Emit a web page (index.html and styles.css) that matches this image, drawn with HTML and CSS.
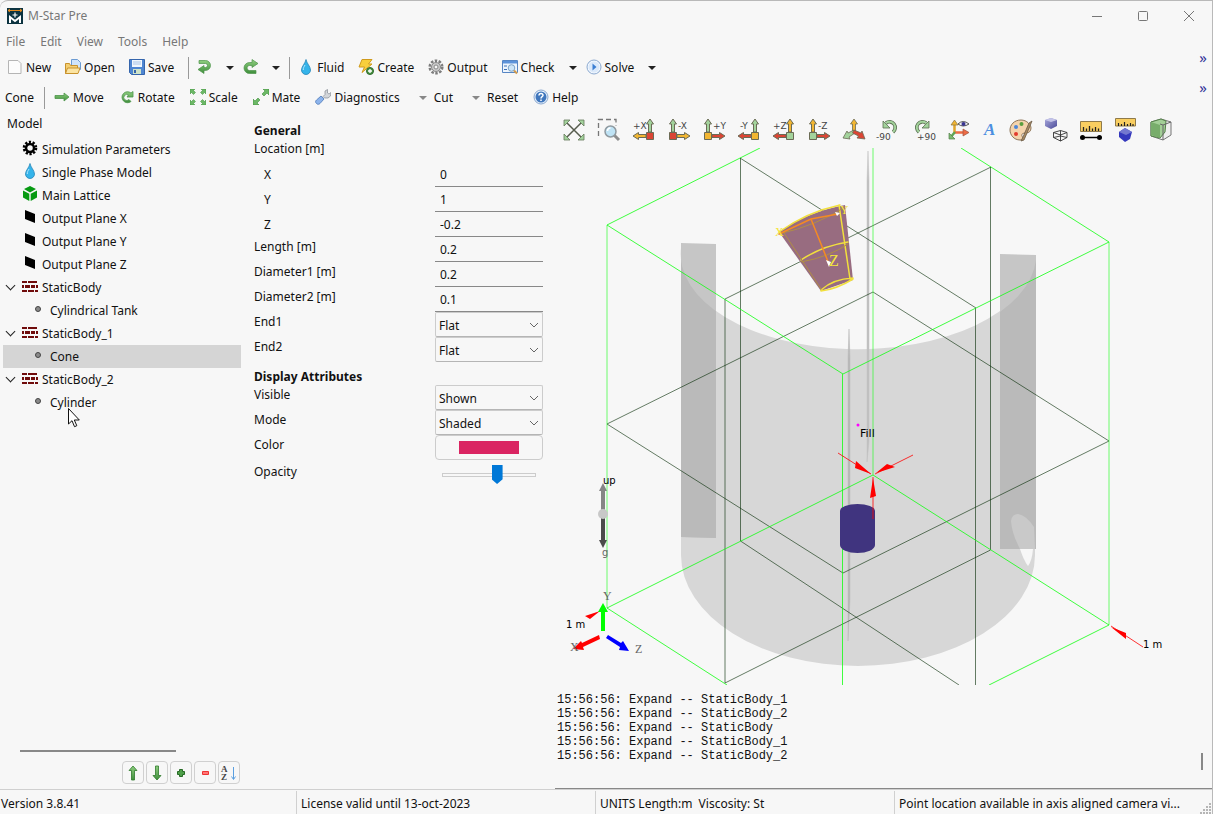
FILE: index.html
```html
<!DOCTYPE html>
<html lang="en">
<head>
    <meta charset="utf-8">
    <title>M-Star Pre</title>
    <link rel="stylesheet" href="styles.css">
</head>
<body>

    <!-- shared icons -->
    <svg class="defs" width="0" height="0">
        <defs>
            <linearGradient id="green" x1="0" y1="0" x2="0" y2="1"><stop offset="0" stop-color="#8fce7f"/><stop offset="1" stop-color="#3f8f3c"/></linearGradient>
            <linearGradient id="purple" x1="0" y1="0" x2="1" y2="1"><stop offset="0" stop-color="#a9a9dc"/><stop offset="1" stop-color="#4a4a98"/></linearGradient>
            <symbol id="drop" viewBox="0 0 16 16"><path d="M8 0.5C7.500 4 3.500 7.500 3.500 11a4.500 4.500 0 0 0 9 0C12.500 7.500 8.500 4 8 .5z" fill="#35b4ea" stroke="#2585b8" stroke-width=".8"/><path d="M7 6c-1 2-2 3-1.700 5" fill="none" stroke="#b5e8ff"/></symbol>
            <symbol id="plane" viewBox="0 0 16 16"><path d="M3 1l10 4v9L3 10z" fill="#000"/></symbol>
            <symbol id="bricks" viewBox="0 0 16 16"><path d="M0 3h5v2H0zM6 3h9v2H6zM0 7h2v3H0zM3 7h5v3H3zM9 7h4v3H9zM14 7h2v3h-2zM0 12h5v2H0zM6 12h6v2H6zM13 12h3v2h-3z" fill="#700b0b"/></symbol>
            <symbol id="dot" viewBox="0 0 16 16"><circle cx="8" cy="8" r="2.500" fill="#8a8a8a" stroke="#444"/></symbol>
            <symbol id="axis-left" viewBox="0 0 24 24"><g stroke="#6b6b55"><path d="M16.500 14V6H14.500L18 1l3.500 5h-2v8z" fill="var(--up)"/><path d="M14 16.500H6.500v-2L1 18l5.500 3.500v-2H14z" fill="var(--side)"/><path d="M14.500 14.500h7v7h-7z" fill="var(--box)"/></g></symbol>
            <symbol id="axis-right" viewBox="0 0 24 24"><g stroke="#6b6b55"><path d="M4.500 14V6h-2L6 1l3.500 5h-2v8z" fill="var(--up)"/><path d="M10 16.500h7.500v-2L23 18l-5.500 3.500v-2H10z" fill="var(--side)"/><path d="M2.500 14.500h7v7h-7z" fill="var(--box)"/></g></symbol>
            <clipPath id="tank-shape"><path d="M681 248A177 95 0 0 0 1036 260V600H681z"/></clipPath>
        </defs>
    </svg>

    <div class="window">
        <header class="titlebar">
            <svg class="logo" width="16" height="16" viewBox="0 0 16 16"><path d="M0 0h16v16H0z" fill="#0c3340"/><path d="M1 2.500h14M3 1L1 2.500 3 4M13 1l2 1.500L13 4" stroke="#e58b1e" fill="none"/><path d="M3 15V9l5 4 5-4v6" fill="none" stroke="#fff" stroke-width="2"/><path d="M8 4.500v5M5.500 7h5" stroke="#fff" stroke-width="1.200"/></svg>
            <span>M-Star Pre</span>
            <div class="controls">
                <button aria-label="Minimize"><svg width="12" height="12"><path d="M1 6.500h10" stroke="#777"/></svg></button>
                <button aria-label="Maximize"><svg width="12" height="12"><rect x="1.500" y="1.500" width="9" height="9" rx="1" fill="none" stroke="#777"/></svg></button>
                <button aria-label="Close"><svg width="12" height="12"><path d="M1 1l10 10M11 1L1 11" stroke="#777"/></svg></button>
            </div>
        </header>

        <nav class="menubar">
            <button>File</button><button>Edit</button><button>View</button><button>Tools</button><button>Help</button>
        </nav>

        <div class="toolbar">
            <button><svg width="16" height="16"><path d="M1.500 1.500h9.500l3 3v10h-12.500z" fill="#fcfcfc" stroke="#b5b5b5"/></svg>New</button>
            <button><svg width="16" height="16"><path d="M6.500.5h6l3 3v7h-9z" fill="#cfe4fa" stroke="#6c9bd2"/><path d="M.5 14.500v-10h4l1 2h7v8z" fill="#f4cf72" stroke="#c8922c"/><path d="M.5 14.500l2-5.500h12.500l-2 5.500z" fill="#fbe4a2" stroke="#c8922c"/></svg>Open</button>
            <button><svg width="16" height="16"><path d="M.5.500h15v15h-13l-2-2z" fill="#4f86d2" stroke="#3565ac"/><path d="M3 1h10v7H3z" fill="#f2f7fd"/><path d="M4 3h8M4 5h8" stroke="#a9c4e6"/><path d="M4 10h8v5H4z" fill="#cfe3c8"/><path d="M5 11h2v3H5z" fill="#3565ac"/></svg>Save</button>
            <span class="sep"></span>
            <button aria-label="Undo"><svg width="15" height="16"><path d="M2 1.500h6.500a5 5 0 0 1 0 10H7v3L1 10.500l6-4v2h1.500a2 2 0 0 0 0-4H2z" fill="url(#green)" stroke="#4d944a" stroke-width=".7"/></svg></button>
            <button class="caret" aria-label="Undo history"></button>
            <button aria-label="Redo"><svg width="15" height="16"><path d="M13 14.500H6.500a5.500 5.500 0 0 1 0-11H9v-3l6 4-6 4v-2H6.500a2.500 2.500 0 0 0 0 5H13z" fill="url(#green)" stroke="#4d944a" stroke-width=".7"/></svg></button>
            <button class="caret" aria-label="Redo history"></button>
            <span class="sep"></span>
            <button><svg width="16" height="16"><use href="#drop"/></svg>Fluid</button>
            <button><svg width="16" height="16"><path d="M4 .5h10L10.500 5H14L4 13.500 6.500 8H1z" fill="#f8cf3c" stroke="#cf9a1c"/><circle cx="12" cy="12" r="3.500" fill="#4a9344" stroke="#2f6b2c"/><path d="M12 10v4M10 12h4" stroke="#fff" stroke-width="1.300"/></svg>Create</button>
            <button><svg width="16" height="16"><circle cx="8" cy="8" r="6.300" fill="none" stroke="#7d7d7d" stroke-width="2.500" stroke-dasharray="2.500 1.450"/><circle cx="8" cy="8" r="4.500" fill="#c9c9c9" stroke="#888"/><circle cx="8" cy="8" r="2" fill="#f7f7f7" stroke="#888"/></svg>Output</button>
            <button><svg width="16" height="16"><path d="M.5 1.500h15v12H.5z" fill="#eef5fd" stroke="#5786c4"/><path d="M1 2h14v2.500H1z" fill="#5d93da"/><path d="M2 7h3M2 10.500h3" stroke="#3f70b5"/><circle cx="9.500" cy="9" r="3.300" fill="#cde5f8" stroke="#7da3c8"/><path d="M12 11.500l3 3" stroke="#d19a4c" stroke-width="2"/></svg>Check</button>
            <button class="caret" aria-label="Check options"></button>
            <button><svg width="16" height="16"><circle cx="8" cy="8" r="7" fill="#f3f8fe" stroke="#8ba9d0"/><circle cx="8" cy="8" r="5.500" fill="#dbe9fa"/><path d="M6.500 4.500l4 3.500-4 3.500z" fill="#3b7ed3"/></svg>Solve</button>
            <button class="caret" aria-label="Solve options"></button>
            <button class="more" aria-label="More tools">»</button>
        </div>

        <div class="toolbar second">
            <span>Cone</span>
            <span class="sep"></span>
            <button><svg width="16" height="16"><path d="M1 6.500h9V4l5 4-5 4V9.500H1z" fill="url(#green)" stroke="#4d944a" stroke-width=".8"/></svg>Move</button>
            <button><svg width="16" height="16"><path d="M12 4A5.500 5.500 0 1 0 12 12.500l-2-2A3 3 0 1 1 9.500 6L8 8h6V2.500z" fill="url(#green)" stroke="#4d944a" stroke-width=".8"/></svg>Rotate</button>
            <button><svg width="16" height="16"><path d="M0 0h5L3.500 1.500l2 2-2 2-2-2L0 5zM16 0h-5l1.500 1.500-2 2 2 2 2-2L16 5zM0 16h5l-1.500-1.500 2-2-2-2-2 2L0 11zM16 16h-5l1.500-1.500-2-2 2-2 2 2L16 11z" fill="#6cb866" stroke="#3f8f3c" stroke-width=".5"/></svg>Scale</button>
            <button><svg width="16" height="16"><path d="M16 0v6l-2-2-3 3-2-2 3-3-2-2zM0 16v-6l2 2 3-3 2 2-3 3 2 2z" fill="#6cb866" stroke="#3f8f3c" stroke-width=".6"/></svg>Mate</button>
            <button><svg width="16" height="16"><path d="M8 7.500l2-2V2l2.500-1.500V4L14 5l2-1.500-.5 3.500-2.500 2H11L9.500 9z" fill="#d3d6da" stroke="#858b93" stroke-width=".7"/><path d="M1.500 14.500c-1.500-1.500-1-2.500 0-3.500L6 7l3 3-4 4.500c-1 1-2.300 1.200-3.500 0z" fill="#8db4ec" stroke="#4d78b8" stroke-width=".8"/></svg>Diagnostics</button>
            <button><span class="caret soft"></span>Cut</button>
            <button><span class="caret soft"></span>Reset</button>
            <button><svg width="16" height="16"><circle cx="8" cy="8" r="7" fill="#e7f0fb" stroke="#8ba9d0"/><circle cx="8" cy="8" r="5.500" fill="#4077bd"/><path d="M6 6.500c0-3 4.200-2.500 4 0-.1 1.200-2 1.300-2 3M8 10.500V12" fill="none" stroke="#fff" stroke-width="1.500"/></svg>Help</button>
            <button class="more" aria-label="More tools">»</button>
        </div>

        <main class="main">
            <section class="model">
                <h2>Model</h2>
                <ul class="tree">
                    <li><svg width="16" height="16"><circle cx="8" cy="8" r="6" fill="none" stroke="#000" stroke-width="2.600" stroke-dasharray="2.200 1.570"/><circle cx="8" cy="8" r="4" fill="none" stroke="#000" stroke-width="2.500"/></svg>Simulation Parameters</li>
                    <li><svg width="16" height="16"><use href="#drop"/></svg>Single Phase Model</li>
                    <li><svg width="16" height="16"><path d="M8 0l6 3-6 3.500L2 3zM1 4.500l6.300 3.300V15L1 11.500zM15 4.500L8.700 7.800V15l6.300-3.500z" fill="#079a12"/></svg>Main Lattice</li>
                    <li><svg width="16" height="16"><use href="#plane"/></svg>Output Plane X</li>
                    <li><svg width="16" height="16"><use href="#plane"/></svg>Output Plane Y</li>
                    <li><svg width="16" height="16"><use href="#plane"/></svg>Output Plane Z</li>
                    <li class="open"><svg width="16" height="16"><use href="#bricks"/></svg>StaticBody</li>
                    <li class="child"><svg width="16" height="16"><use href="#dot"/></svg>Cylindrical Tank</li>
                    <li class="open"><svg width="16" height="16"><use href="#bricks"/></svg>StaticBody_1</li>
                    <li class="child selected"><svg width="16" height="16"><use href="#dot"/></svg>Cone</li>
                    <li class="open"><svg width="16" height="16"><use href="#bricks"/></svg>StaticBody_2</li>
                    <li class="child"><svg width="16" height="16"><use href="#dot"/></svg>Cylinder
                        <svg class="pointer" width="12" height="20"><path d="M.5.500v15.500l3.500-3.300 2.500 6 2.300-1-2.500-5.700h5z" fill="#fff" stroke="#111"/></svg>
                    </li>
                </ul>
                <div class="hscroll"></div>
                <div class="tree-buttons">
                    <button aria-label="Move up"><svg width="16" height="16"><path d="M8 1l4 4.500H9.500V15h-3V5.500H4z" fill="url(#green)" stroke="#2f7a2c" stroke-width=".8"/></svg></button>
                    <button aria-label="Move down"><svg width="16" height="16"><path d="M8 15l4-4.500H9.500V1h-3v9.500H4z" fill="url(#green)" stroke="#2f7a2c" stroke-width=".8"/></svg></button>
                    <button aria-label="Add"><svg width="16" height="16"><path d="M6.500 4.500h3v2h2v3h-2v2h-3v-2h-2v-3h2z" fill="#4fa04a" stroke="#276b25"/></svg></button>
                    <button aria-label="Remove"><svg width="16" height="16"><path d="M5.500 6.500h6v3h-6z" fill="#ff7777" stroke="#e33"/></svg></button>
                    <button aria-label="Sort"><svg width="18" height="20"><text class="sort-text" x="1" y="9">A</text><text class="sort-text" x="1" y="17">Z</text><path d="M13.500 4v12M11.500 13.500l2 3 2-3" fill="none" stroke="#5b9fe0"/></svg></button>
                </div>
            </section>

            <form class="props">
                <h3>General</h3>
                <p class="group">Location [m]</p>
                <div class="row sub"><label for="x">X</label><input id="x" type="text" value="0"></div>
                <div class="row sub"><label for="y">Y</label><input id="y" type="text" value="1"></div>
                <div class="row sub"><label for="z">Z</label><input id="z" type="text" value="-0.2"></div>
                <div class="row"><label for="length">Length [m]</label><input id="length" type="text" value="0.2"></div>
                <div class="row"><label for="d1">Diameter1 [m]</label><input id="d1" type="text" value="0.2"></div>
                <div class="row"><label for="d2">Diameter2 [m]</label><input id="d2" type="text" value="0.1"></div>
                <div class="row"><label for="end1">End1</label><select id="end1"><option>Flat</option></select></div>
                <div class="row"><label for="end2">End2</label><select id="end2"><option>Flat</option></select></div>
                <h3 class="display">Display Attributes</h3>
                <div class="row"><label for="visible">Visible</label><select id="visible"><option>Shown</option></select></div>
                <div class="row"><label for="mode">Mode</label><select id="mode"><option>Shaded</option></select></div>
                <div class="row"><label for="color">Color</label><button type="button" id="color" class="swatch" aria-label="Color"><span></span></button></div>
                <div class="row slider"><label for="opacity">Opacity</label><input id="opacity" type="range" min="0" max="100" value="60"></div>
            </form>

            <section class="view">
                <div class="view-tools">
                    <button aria-label="Fit view"><svg width="24" height="24"><path d="M4 4l16 16M20 4L4 20" stroke="#555b4c" stroke-width="1.500"/><path d="M2 2h6L2 8zM22 2h-6l6 6zM2 22h6l-6-6zM22 22h-6l6-6z" fill="#a3d39c" stroke="#66785c" stroke-width=".8"/></svg></button>
                    <button aria-label="Zoom to box"><svg width="24" height="24"><path d="M1.500 18V1.500H19V8" fill="none" stroke="#777" stroke-width="1.300" stroke-dasharray="5 3"/><path d="M17 17l5 5" stroke="#8d8d8d" stroke-width="3"/><circle cx="13.500" cy="13.500" r="5.500" fill="#bfe3f5" stroke="#909aa0" stroke-width="1.500"/><path d="M10.500 13a3 3 0 0 1 3-3" fill="none" stroke="#fff" stroke-width="1.500"/></svg></button>
                    <button class="axis x" aria-label="+X view"><svg width="24" height="24"><use href="#axis-left"/><text x="1" y="11">+X</text></svg></button>
                    <button class="axis x" aria-label="-X view"><svg width="24" height="24"><use href="#axis-right"/><text x="11" y="11">-X</text></svg></button>
                    <button class="axis y" aria-label="+Y view"><svg width="24" height="24"><use href="#axis-right"/><text x="11" y="11">+Y</text></svg></button>
                    <button class="axis y" aria-label="-Y view"><svg width="24" height="24"><use href="#axis-left"/><text x="3" y="11">-Y</text></svg></button>
                    <button class="axis z" aria-label="+Z view"><svg width="24" height="24"><use href="#axis-left"/><text x="1" y="11">+Z</text></svg></button>
                    <button class="axis z" aria-label="-Z view"><svg width="24" height="24"><use href="#axis-right"/><text x="11" y="11">-Z</text></svg></button>
                    <button aria-label="Isometric view"><svg width="24" height="24"><g stroke="#6b6b55" stroke-width=".8"><path d="M10.500 14V6H8.500L12 1l3.500 5h-2v8z" fill="#f2b632"/><path d="M12 12l-6 3-1-2-4 7 7 1-1-2 6-4z" fill="#a3d39c"/><path d="M12 12l7 3 1-2 3 8-8-1 1.500-2-6-3z" fill="#db4534"/></g></svg></button>
                    <button class="axis" aria-label="Rotate -90"><svg width="24" height="24"><path d="M9 5a5.500 5.500 0 1 1 7 9" fill="none" stroke="#5b7052" stroke-width="3.600"/><path d="M9 5a5.500 5.500 0 1 1 7 9" fill="none" stroke="#a3d39c" stroke-width="2"/><path d="M6 3v7h7z" fill="#a3d39c" stroke="#5b7052" stroke-width=".8"/><text x="-1" y="22">-90</text></svg></button>
                    <button class="axis" aria-label="Rotate +90"><svg width="24" height="24"><path d="M14 5a5.500 5.500 0 1 0-7 9" fill="none" stroke="#5b7052" stroke-width="3.600"/><path d="M14 5a5.500 5.500 0 1 0-7 9" fill="none" stroke="#a3d39c" stroke-width="2"/><path d="M17 3v7h-7z" fill="#a3d39c" stroke="#5b7052" stroke-width=".8"/><text x="5" y="22">+90</text></svg></button>
                    <button aria-label="Show axes"><svg width="24" height="24"><g fill="none"><path d="M7.500 15V6" stroke="#e0a52c" stroke-width="2.500"/><path d="M8 14.500h9" stroke="#ee6b45" stroke-width="2.500"/><path d="M8 14l-5 6" stroke="#5fa554" stroke-width="2.500"/></g><path d="M4 7l3.500-5L11 7z" fill="#f2b632" stroke="#857347" stroke-width=".7"/><path d="M16 11l6 3.500-6 3.500z" fill="#ee6b45" stroke="#9b5340" stroke-width=".7"/><path d="M2 15v6h6z" fill="#7cb870" stroke="#55804a" stroke-width=".7"/><path d="M11 6q5-5 11 0-6 4-11 0z" fill="#eee" stroke="#555"/><circle cx="16.500" cy="6" r="2" fill="#39358f"/></svg></button>
                    <button class="narrow" aria-label="Text"><svg width="16" height="24"><text class="letter" x="2" y="17">A</text></svg></button>
                    <button aria-label="Colors"><svg width="24" height="24"><path d="M12 2C5 2 1 7 1 12s4 10 10 10c3 0 3-2 2-4s1-3 4-3 5-2 5-5-4-8-10-8z" fill="#f4d3ac" stroke="#8d7457"/><circle cx="7" cy="9" r="2" fill="#4c86d8"/><circle cx="12.500" cy="6" r="2" fill="#5a9e3f"/><circle cx="7" cy="16" r="2" fill="#e23a2c"/><path d="M20 5l3-2-2 5-6 14-3 1 2-4z" fill="#a98a62" stroke="#6b5a45" stroke-width=".8"/></svg></button>
                    <button aria-label="Solid or wireframe"><svg width="24" height="24"><path d="M1 2l6-2 6 2v6l-6 3-6-3z" fill="url(#purple)"/><path d="M1 2l6 2 6-2-6-2z" fill="#c3c3e8"/><path d="M9.500 14.500l7-2 6.500 2v5L16.500 23l-7-3.500zM9.500 14.500l7 2.500 6.500-2.500M16.500 17v6M16.500 12.500v5.500l-7 1.500M16.500 18l6.500 1.500" fill="none" stroke="#333" stroke-width=".9"/></svg></button>
                    <button aria-label="Measure"><svg width="24" height="24"><path d="M1.500 3.500h21v10h-21z" fill="#f9ce60" stroke="#8f7a4a"/><path d="M4.500 13V9M7.500 13v-2.500M10.500 13V8M13.500 13v-2.500M16.500 13V9M19.500 13v-2.500" stroke="#222" stroke-width="1.300"/><path d="M3 19.500h18" stroke="#000" stroke-width="1.500"/><circle cx="3.500" cy="19.500" r="2.500"/><circle cx="20.500" cy="19.500" r="2.500"/></svg></button>
                    <button aria-label="Measure body"><svg width="24" height="24"><path d="M1.500.500h20v7.500h-20z" fill="#f9ce60" stroke="#8f7a4a"/><path d="M4.500 8V5M7.500 8V6M10.500 8V4M13.500 8V6M16.500 8V5M19 8V6" stroke="#222" stroke-width="1.200"/><path d="M11 10l7 4-2 7-5 3-6-5 0-5z" fill="#3438bd"/><path d="M11 10l7 4-6 3-7-3z" fill="#7377cf"/></svg></button>
                    <button aria-label="Clip box"><svg width="24" height="24"><path d="M2 4l10-3 10 3v13l-8 5-12-4z" fill="#eee" stroke="#777"/><path d="M2 4l10-3 5 2-1 11-5 6-9-2z" fill="#a3cf97" stroke="#55804a"/><path d="M2 4l9 3v13l-9-3z" fill="#78ad6b"/><path d="M14 7l8-3M14 7v15M14 7l-3-1" fill="none" stroke="#666"/></svg></button>
                </div>

                <!-- 3D scene: domain box, tank, cone and cylinder -->
                <svg class="scene" viewBox="555 148 657 537" preserveAspectRatio="xMidYMid meet">
                    <g class="tank">
                        <path d="M681 248A177 95 0 0 0 1035 260V555A177 111 0 0 1 681 555z" fill="#d7d7d7"/>
                        <path d="M681 243l35 1v294l-35-1zM1000 254l36 1v294h-36z" fill="#c6c6c6"/>
                        <path d="M681 243l35 1v294l-35-1zM1000 254l36 1v294h-36z" fill="#bababa" clip-path="url(#tank-shape)"/>
                        <path d="M1011 521q1-7 7-7 8 1 16 13l1 22h-15q-8-15-9-28z" fill="#c9c9c9"/>
                        <path d="M1020 549h13q-1 12-5 17-4-5-8-17z" fill="#f7f7f7"/>
                        <path d="M868 151l1 30v260l-2 21V181z" fill="#c0c0c0" stroke="#c0c0c0" stroke-width=".5"/>
                        <path d="M849 329l1 30v240l-2 42V359z" fill="#b8b8b8" stroke="#b8b8b8" stroke-width=".5"/>
                    </g>
                    <g class="planes">
                        <path d="M740.500 158V541L959 685"/>
                        <path d="M740 158L976 308"/>
                        <path d="M975.500 308V685"/>
                        <path d="M725 299L991 167M990.500 167V550L725 683M725 299V683"/>
                        <path d="M607 424L873 292 1109 441 843 573z"/>
                    </g>
                    <g class="box">
                        <path d="M760 148L607 225 843 374 1109 242 961 148"/>
                        <path class="faint" d="M607 225V608M873 148V475M1109 242V625"/>
                        <path d="M842.500 374V685"/>
                        <path d="M727 685L607 608 873 475 1109 625 989 685"/>
                    </g>
                    <g class="cone">
                        <path d="M779 232Q807 212 845 205L853 280 821 291z" fill="#986c80"/>
                        <path d="M779 232Q807 212 840 205M801 260Q822 246 848 242M821 291Q837 289 853 279M821 290Q833 279 853 278M839 205L850 279" stroke="#f2e03c" stroke-width="1.500"/>
                        <path d="M779 234Q818 225 845 207M801 262Q829 257 848 244M784 233L821 289" stroke="#b08e45"/>
                        <path d="M779 234L811 219 838 214M811 219L829 264" stroke="#f58a22" stroke-width="1.500"/>
                        <path d="M835 212l5 1-3 3zM826 260l5 2-2 5z" fill="#fff"/>
                        <text x="775" y="236">X</text><text x="840" y="214">Y</text><text class="big" x="829" y="266">Z</text>
                    </g>
                    <path d="M840 511a17.500 7 0 0 1 35 0v34a17.500 8 0 0 1-35 0z" fill="#40347f"/>
                    <circle cx="858" cy="425" r="1.500" fill="#f0f"/>
                    <g fill="#f00" stroke="#f00" stroke-width="1">
                        <path d="M838 453l33 21M913 455l-38 19M873 519v-42M1143 647l-32-21" fill="none" stroke-width=".8"/>
                        <path d="M871 474l-15-13-1 7zM876 473l11-9 8 3zM873 478l-3 20 6-2zM1111 627l15 6v6zM600 611l-15 5 5 3z" stroke="none"/>
                    </g>
                    <g class="scene-labels">
                        <text class="fill-label" x="860" y="437">Fill</text>
                        <text x="603" y="484">up</text>
                        <text x="602" y="556" fill="#666">g</text>
                        <text x="566" y="628">1 m</text>
                        <text x="1143" y="648">1 m</text>
                    </g>
                    <g>
                        <path d="M601 510V491h-2l4-8 4 8h-2v19z" fill="#858585"/>
                        <path d="M601 516v24h-2l4 8 4-8h-2v-24z" fill="#4b4b4b"/>
                        <circle cx="603" cy="514" r="5" fill="#c8c8c8"/>
                        <path d="M601 631V612h-3l5-9 5 9h-3v19z" fill="#0f0"/>
                        <path d="M599 635l-17 8-1-2-8 8 11 1-1-3 17-8z" fill="#f00"/>
                        <path d="M608 635l13 8 2-2 6 10-10-1 1-3-14-9z" fill="#00f"/>
                    </g>
                    <g class="triad">
                        <text x="570" y="651">X</text><text x="603" y="600">Y</text><text x="635" y="653">Z</text>
                    </g>
                </svg>

                <div class="log">
                    <pre>15:56:56: Expand -- StaticBody_1
15:56:56: Expand -- StaticBody_2
15:56:56: Expand -- StaticBody
15:56:56: Expand -- StaticBody_1
15:56:56: Expand -- StaticBody_2</pre>
                    <span class="thumb"></span>
                </div>
            </section>
        </main>

        <footer class="status">
            <span>Version 3.8.41</span>
            <span>License valid until 13-oct-2023</span>
            <span>UNITS Length:m&nbsp; Viscosity: St</span>
            <span>Point location available in axis aligned camera vi...</span>
            <svg class="grip" width="12" height="12"><path d="M9 1h2v2H9zM6 4h2v2H6zM9 4h2v2H9zM3 7h2v2H3zM6 7h2v2H6zM9 7h2v2H9zM0 10h2v2H0zM3 10h2v2H3zM6 10h2v2H6zM9 10h2v2H9z" fill="#b5b5b5"/></svg>
        </footer>
    </div>

</body>
</html>
```
FILE: styles.css
```css
* {
    box-sizing: border-box;
}

body {
    margin: 0;
    background: #f7f7f7;
    color: #111;
    font-family: "Noto Sans", "Open Sans", sans-serif;
    font-size: 12px;
    line-height: 18px;
}

button, input, select {
    font: inherit;
    color: inherit;
}

button {
    background: none;
    border: none;
    padding: 0;
}

svg {
    display: block;
    flex: none;
}

.defs {
    position: absolute;
}

.window {
    display: flex;
    flex-direction: column;
    min-height: 100vh;
    border-top: 1px solid #b9b9b9;
    border-right: 1px solid #b9b9b9;
    border-top-left-radius: 8px;
}

/* title and menus */
.titlebar {
    display: flex;
    align-items: center;
    gap: 5px;
    height: 29px;
    padding-left: 7px;
    color: #777;
}

.controls {
    display: flex;
    gap: 34px;
    margin-left: auto;
    padding-right: 17px;
}

.menubar {
    display: flex;
    gap: 15px;
    height: 22px;
    padding: 2px 6px 0;
}

.menubar button {
    color: #777;
}

/* toolbars */
.toolbar {
    display: flex;
    align-items: center;
    gap: 14px;
    height: 30px;
    padding: 1px 0 0 7px;
}

.toolbar.second {
    gap: 15px;
    padding-left: 5px;
}

.toolbar button {
    display: flex;
    align-items: center;
    gap: 3px;
}

.toolbar svg {
    margin-bottom: 2px;
}

.sep {
    width: 1px;
    height: 22px;
    margin: 0 -6px 0 0;
    background: #999;
}

.second .sep {
    margin-left: -5px;
}

.caret::before {
    content: "";
    display: block;
    border: 4px solid transparent;
    border-top-color: #222;
    border-bottom-width: 0;
}

button.caret {
    margin-right: -5px;
}

.caret.soft {
    padding: 0 4px;
}

.caret.soft::before {
    border-top-color: #888;
}

.toolbar .more {
    margin-left: auto;
    padding-right: 5px;
    color: #339;
    font-size: 15px;
    line-height: 8px;
    align-self: flex-start;
}

/* main area */
.main {
    display: grid;
    grid-template-columns: 245px 310px 1fr;
    flex: 1;
}

.model {
    display: flex;
    flex-direction: column;
    padding: 3px 4px 5px 3px;
}

.model h2 {
    margin: 0 0 5px 4px;
    font-size: 12px;
    font-weight: normal;
}

.tree {
    list-style: none;
    margin: 0;
    padding: 0;
}

.tree li {
    position: relative;
    display: flex;
    align-items: center;
    gap: 4px;
    height: 23px;
    padding-left: 19px;
}

.tree svg {
    margin-bottom: 3px;
}

.tree .child {
    padding-left: 27px;
}

.tree .selected {
    background: #d5d5d5;
}

.tree .open::before {
    content: "";
    position: absolute;
    left: 4px;
    top: 6px;
    width: 6px;
    height: 6px;
    border: solid #222;
    border-width: 0 1px 1px 0;
    transform: rotate(45deg);
}

.pointer {
    position: absolute;
    left: 65px;
    top: 17px;
}

.hscroll {
    width: 156px;
    height: 2px;
    margin: auto 0 9px 17px;
    background: #888;
}

.tree-buttons {
    display: flex;
    gap: 2px;
    margin-left: 119px;
}

.tree-buttons button {
    display: grid;
    place-items: center;
    width: 22px;
    height: 23px;
    border: 1px solid #d0d0d0;
    border-radius: 4px;
}

.sort-text {
    font: bold 9px "Liberation Serif", serif;
    fill: #444;
}

/* property form */
.props {
    padding: 10px 9px;
}

.props h3 {
    margin: 0;
    font-size: 12px;
    line-height: 18px;
}

.props .display {
    margin: 6px 0 -1px;
}

.group {
    margin: 0 0 4px;
}

.row {
    display: grid;
    grid-template-columns: 181px 108px;
    height: 25px;
}

.row label {
    padding-top: 1px;
}

.row.sub label {
    padding: 4px 10px 0;
}

.row input[type="text"] {
    width: 100%;
    height: 25px;
    padding: 0 5px;
    border: none;
    border-bottom: 1px solid #888;
    background: none;
    outline: none;
}

.row select {
    appearance: none;
    width: 100%;
    height: 25px;
    padding: 2px 3px 0;
    border: 1px solid #ccc;
    border-bottom-color: #b5b5b5;
    border-radius: 2px;
    background: url("data:image/svg+xml,%3Csvg xmlns='http://www.w3.org/2000/svg' width='10' height='6'%3E%3Cpath d='M1 1l4 4 4-4' fill='none' stroke='%23666'/%3E%3C/svg%3E") no-repeat right 3px center;
}

.swatch {
    display: grid;
    place-items: center;
    height: 25px;
    border: 1px solid #ccc;
    border-radius: 4px;
}

.swatch span {
    width: 60px;
    height: 13px;
    background: #da2562;
}

.row.slider {
    margin-top: 2px;
}

.slider input {
    appearance: none;
    width: 94px;
    height: 20px;
    margin: 3px 7px;
    background: none;
}

.slider input::-webkit-slider-runnable-track {
    height: 4px;
    border: 1px solid #ccc;
}

.slider input::-webkit-slider-thumb {
    appearance: none;
    width: 11px;
    height: 19px;
    margin-top: -9px;
    background: #0078d7;
    clip-path: polygon(0 0, 100% 0, 100% 75%, 50% 100%, 0 75%);
}

/* 3D view */
.view {
    display: flex;
    flex-direction: column;
    min-width: 0;
}

.view-tools {
    display: flex;
    gap: 11px;
    height: 36px;
    padding: 5px 7px;
}

.view-tools svg {
    overflow: visible;
}

.axis text {
    font: 9px "DejaVu Sans", sans-serif;
    fill: #444;
}

.x {
    --up: #a3d39c;
    --box: #db4534;
    --side: #f2b632;
}

.y {
    --up: #a3d39c;
    --box: #f2b632;
    --side: #db4534;
}

.z {
    --up: #f2b632;
    --box: #a3d39c;
    --side: #db4534;
}

.letter {
    font: italic bold 17px "Liberation Serif", serif;
    fill: #4c8fe0;
}

.scene {
    width: 100%;
}

.planes path {
    fill: none;
    stroke: #002800;
    stroke-opacity: .6;
}

.box path {
    fill: none;
    stroke: #1f1;
    stroke-opacity: .8;
}

.box .faint {
    stroke-opacity: .6;
}

.cone path {
    stroke-linecap: round;
}

.cone path[stroke] {
    fill: none;
}

.cone text {
    font: 12px "Liberation Serif", serif;
    fill: #f5e53c;
}

.cone .big {
    font-size: 16px;
}

.scene-labels text {
    font-family: "DejaVu Sans", sans-serif;
    font-size: 10px;
}

.scene-labels .fill-label {
    font-size: 11px;
}

.triad text {
    font: 12px "Liberation Serif", serif;
    fill: #666;
}

.log {
    display: flex;
    justify-content: space-between;
    flex: 1;
    padding: 8px 9px 0 2px;
    border-bottom: 1px solid #888;
}

.log pre {
    margin: 0;
    font: 12px/14px "Liberation Mono", monospace;
}

.thumb {
    align-self: flex-end;
    width: 2px;
    height: 17px;
    margin-bottom: 18px;
    background: #888;
}

/* status bar */
.status {
    display: flex;
    position: relative;
    height: 25px;
    padding-top: 1px;
    border-top: 1px solid #d0d0d0;
}

.status span {
    flex: 0 0 299px;
    padding: 4px 4px 0;
    border-left: 1px solid #d0d0d0;
    white-space: nowrap;
}

.status span:first-child {
    flex-basis: 296px;
    padding-left: 1px;
    border-left: none;
}

.status span:nth-child(4) {
    flex: 1;
}

.grip {
    position: absolute;
    right: 0;
    bottom: 0;
}
```
